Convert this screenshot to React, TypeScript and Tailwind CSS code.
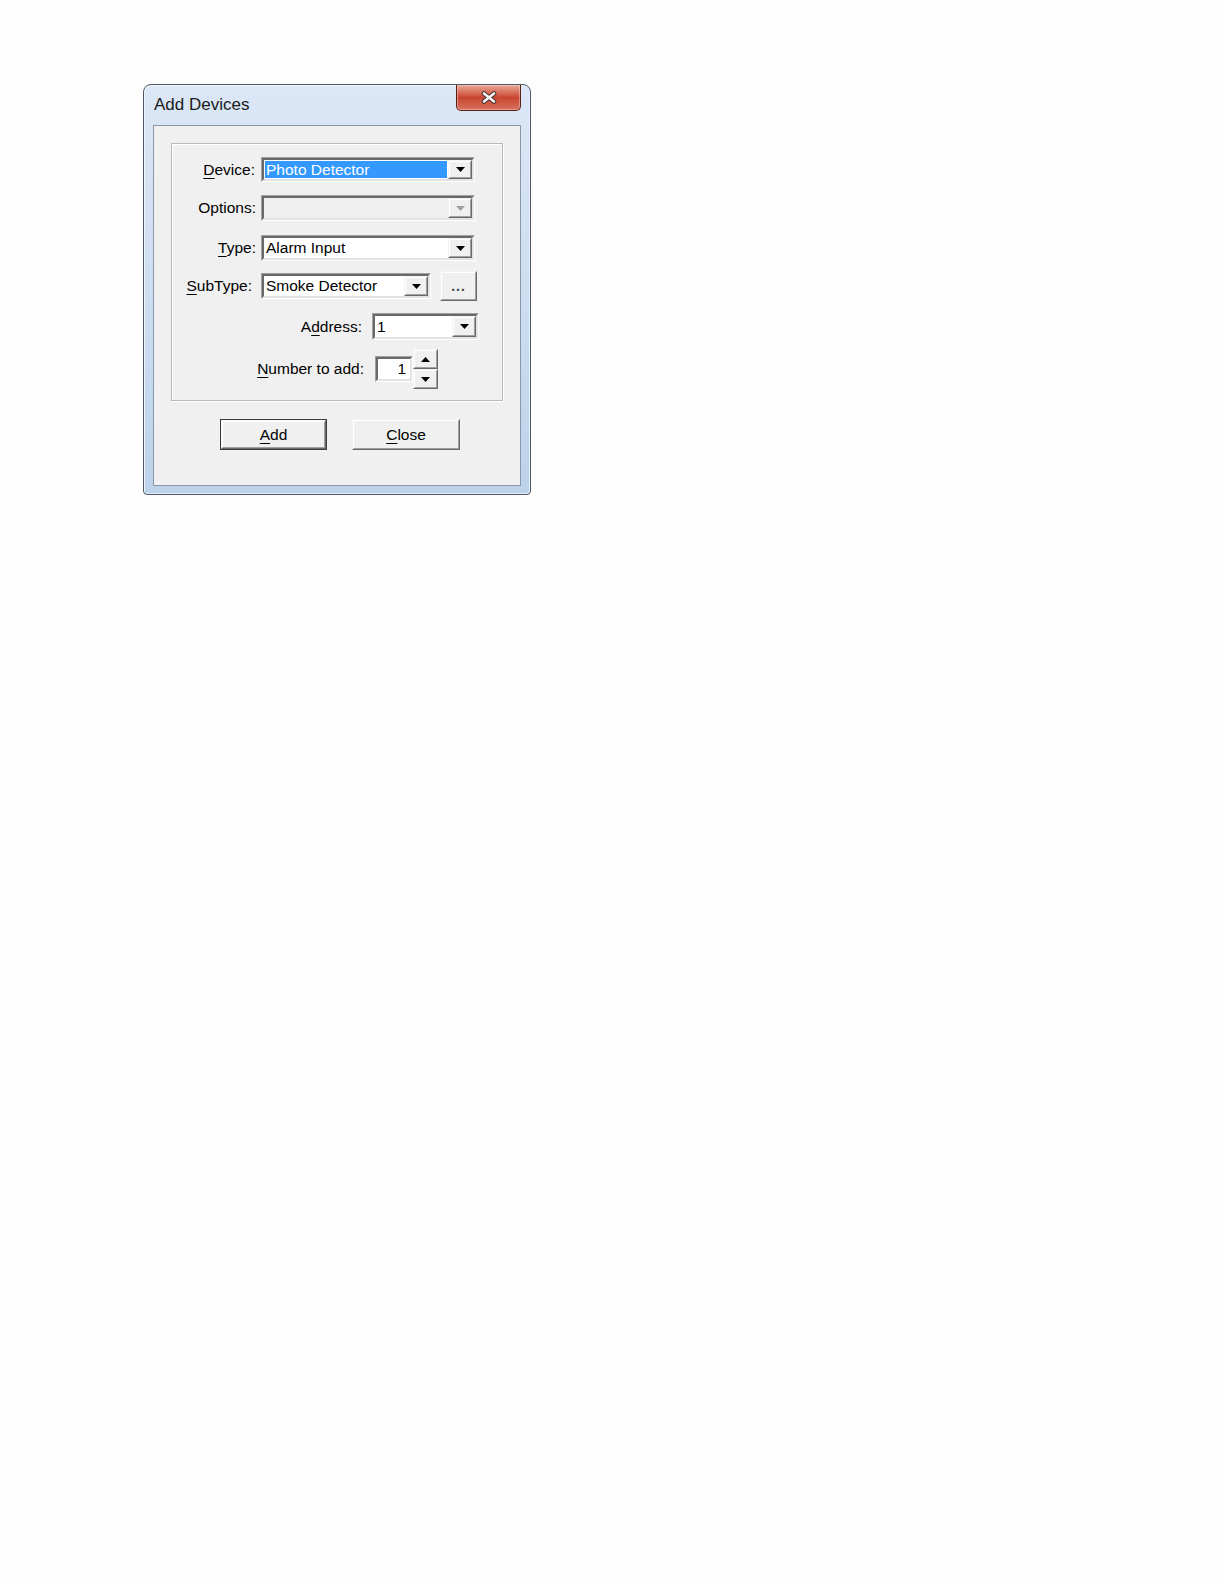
import React from "react";

const font = { fontFamily: '"Liberation Sans", Arial, sans-serif' };

function Arrow({ dir = "down", color = "#000" }: { dir?: "down" | "up"; color?: string }) {
  return (
    <svg width="9" height="5" viewBox="0 0 9 5" className="block">
      {dir === "down" ? (
        <polygon points="0,0 9,0 4.5,5" fill={color} />
      ) : (
        <polygon points="0,5 9,5 4.5,0" fill={color} />
      )}
    </svg>
  );
}

function RaisedBox({ className = "", children }: { className?: string; children?: React.ReactNode }) {
  return (
    <div className={`border border-t-[#f4f4f4] border-l-[#f4f4f4] border-r-[#696969] border-b-[#696969] bg-[#f0f0f0] ${className}`}>
      <div className="w-full h-full border border-t-[#ffffff] border-l-[#ffffff] border-r-[#a0a0a0] border-b-[#a0a0a0] flex items-center justify-center">
        {children}
      </div>
    </div>
  );
}

function Sunken({ className = "", inner = "", children }: { className?: string; inner?: string; children?: React.ReactNode }) {
  return (
    <div className={`border border-t-[#a0a0a0] border-l-[#a0a0a0] border-r-[#ffffff] border-b-[#ffffff] ${className}`}>
      <div className={`w-full h-full border-2 border-t-[#696969] border-l-[#696969] border-r-[#e3e3e3] border-b-[#e3e3e3] flex ${inner}`}>
        {children}
      </div>
    </div>
  );
}

function Combo({
  w,
  h,
  text,
  selected,
  disabled,
}: {
  w: string;
  h: string;
  text?: string;
  selected?: boolean;
  disabled?: boolean;
}) {
  return (
    <Sunken className={`${w} ${h}`} inner={disabled ? "bg-[#f0f0f0]" : "bg-white"}>
      <div className="flex-1 flex items-stretch p-[1px] min-w-0">
        {text !== undefined && (
          <div
            className={`flex-1 flex items-center pl-[1px] text-[15.5px] leading-none whitespace-nowrap ${
              selected ? "bg-[#3399ff] text-white" : "text-black"
            }`}
          >
            {text}
          </div>
        )}
      </div>
      <RaisedBox className="w-[24px] h-full">
        <Arrow color={disabled ? "#a0a0a0" : "#000"} />
      </RaisedBox>
    </Sunken>
  );
}

function U({ children }: { children: React.ReactNode }) {
  return <span className="underline decoration-1 underline-offset-[3px]">{children}</span>;
}

export default function App() {
  return (
    <div className="min-h-screen bg-[#fdfdfd] pt-[84px] pl-[143px]" style={font}>
      <div className="w-[388px] h-[411px] rounded-t-[8px] rounded-b-[4px] border border-[#4e5a68] bg-gradient-to-b from-[#dbe7f6] via-[#cddef1] to-[#bcd2ea] flex flex-col px-[9px] pb-[8px] shadow-[inset_1px_1px_0_#eef5fc,inset_-1px_-1px_0_#e6eff9]">
        {/* Title bar */}
        <div className="h-[40px] flex items-start justify-between">
          <div className="mt-[9px] ml-[1px] text-[17px] text-[#1b1b1b] leading-[22px]">Add Devices</div>
          <div className="w-[65px] h-[26px] rounded-b-[5px] border border-t-0 border-[#5a1f14] bg-gradient-to-b from-[#e9a898] via-[#c9452f] to-[#d5715c] flex items-center justify-center shadow-[inset_0_0_0_1px_rgba(255,220,210,0.45)]">
            <svg width="18" height="13" viewBox="0 0 18 13">
              <path d="M4 2.5 L14 10.5 M14 2.5 L4 10.5" stroke="#4a3030" strokeWidth="4.6" strokeLinecap="round" />
              <path d="M4 2.5 L14 10.5 M14 2.5 L4 10.5" stroke="#f4f4f4" strokeWidth="2.6" strokeLinecap="round" />
            </svg>
          </div>
        </div>

        {/* Client area */}
        <div className="flex-1 border border-[#8a97a6] bg-[#f0f0f0] flex flex-col text-[15.5px] text-black">
          {/* Group box */}
          <div className="mx-[17px] mt-[17px] border border-[#b9b9b9] shadow-[inset_1px_1px_0_#ffffff,1px_1px_0_#ffffff] flex flex-col pb-[11px]">
            <div className="mt-[13px] h-[25px] flex items-center">
              <div className="w-[89px] pr-[6px] text-right">
                <U>D</U>evice:
              </div>
              <Combo w="w-[214px]" h="h-[25px]" text="Photo Detector" selected />
            </div>
            <div className="mt-[13px] h-[26px] flex items-center">
              <div className="w-[89px] pr-[5px] text-right">Options:</div>
              <Combo w="w-[214px]" h="h-[26px]" disabled />
            </div>
            <div className="mt-[14px] h-[26px] flex items-center">
              <div className="w-[89px] pr-[5px] text-right">
                <U>T</U>ype:
              </div>
              <Combo w="w-[214px]" h="h-[26px]" text="Alarm Input" />
            </div>
            <div className="mt-[10px] h-[30px] flex items-center">
              <div className="w-[89px] pr-[9px] text-right">
                <U>S</U>ubType:
              </div>
              <Combo w="w-[170px]" h="h-[26px]" text="Smoke Detector" />
              <RaisedBox className="ml-[9px] w-[37px] h-[30px]">
                <span className="text-[14px] font-bold text-[#444] leading-none tracking-[1px] -mt-[1px]">...</span>
              </RaisedBox>
            </div>
            <div className="mt-[12px] h-[27px] flex items-center">
              <div className="w-[200px] pr-[10px] text-right">
                A<U>d</U>dress:
              </div>
              <Combo w="w-[107px]" h="h-[27px]" text="1" />
            </div>
            <div className="mt-[9px] h-[40px] flex items-center">
              <div className="w-[203px] pr-[11px] text-right">
                <U>N</U>umber to add:
              </div>
              <Sunken className="w-[38px] h-[26px]" inner="bg-white items-center justify-end pr-[4px]">
                <span className="leading-none">1</span>
              </Sunken>
              <div className="flex flex-col w-[25px] h-[40px]">
                <RaisedBox className="w-[25px] h-[20px]">
                  <Arrow dir="up" />
                </RaisedBox>
                <RaisedBox className="w-[25px] h-[20px]">
                  <Arrow />
                </RaisedBox>
              </div>
            </div>
          </div>

          {/* Buttons */}
          <div className="mt-[18px] pl-[66px] flex gap-[25px]">
            <div className="w-[107px] h-[31px] border border-[#3c3c3c]">
              <RaisedBox className="w-full h-full">
                <span className="leading-none">
                  <U>A</U>dd
                </span>
              </RaisedBox>
            </div>
            <RaisedBox className="w-[108px] h-[31px]">
              <span className="leading-none">
                <U>C</U>lose
              </span>
            </RaisedBox>
          </div>
        </div>
      </div>
    </div>
  );
}
